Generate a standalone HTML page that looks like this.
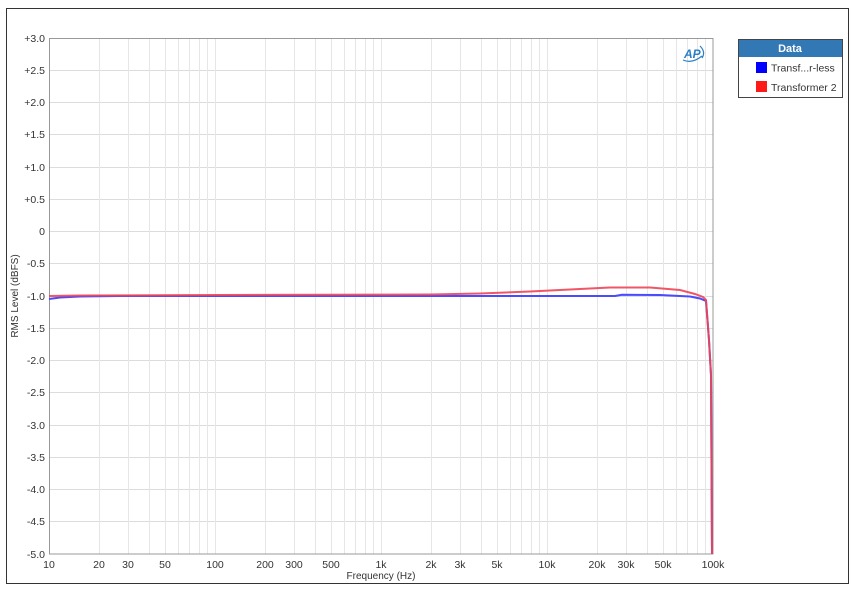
<!DOCTYPE html>
<html><head><meta charset="utf-8"><style>
body{margin:0;background:#fff;width:853px;height:596px;overflow:hidden;font-family:"Liberation Sans",sans-serif}
</style></head><body>
<svg width="853" height="596" xmlns="http://www.w3.org/2000/svg" font-family="Liberation Sans, sans-serif" font-size="10.5" fill="#333">
<rect x="6.5" y="8.5" width="842" height="575" fill="#fff" stroke="#333" stroke-width="1"/>
<g stroke="#dcdcdc" stroke-width="1">
<!-- horizontal -->
<line x1="49" x2="713" y1="70.5" y2="70.5"/><line x1="49" x2="713" y1="102.5" y2="102.5"/><line x1="49" x2="713" y1="134.5" y2="134.5"/><line x1="49" x2="713" y1="167.5" y2="167.5"/><line x1="49" x2="713" y1="199.5" y2="199.5"/><line x1="49" x2="713" y1="231.5" y2="231.5"/><line x1="49" x2="713" y1="263.5" y2="263.5"/><line x1="49" x2="713" y1="296.5" y2="296.5"/><line x1="49" x2="713" y1="328.5" y2="328.5"/><line x1="49" x2="713" y1="360.5" y2="360.5"/><line x1="49" x2="713" y1="392.5" y2="392.5"/><line x1="49" x2="713" y1="425.5" y2="425.5"/><line x1="49" x2="713" y1="457.5" y2="457.5"/><line x1="49" x2="713" y1="489.5" y2="489.5"/><line x1="49" x2="713" y1="521.5" y2="521.5"/>
</g>
<g stroke="#e6e6e6" stroke-width="1" id="v">
<!-- per decade offsets: 50,79,100,116,129,140,150,158 -->
<line x1="99.5" x2="99.5" y1="38" y2="554"/><line x1="128.5" x2="128.5" y1="38" y2="554"/><line x1="149.5" x2="149.5" y1="38" y2="554"/><line x1="165.5" x2="165.5" y1="38" y2="554"/><line x1="178.5" x2="178.5" y1="38" y2="554"/><line x1="189.5" x2="189.5" y1="38" y2="554"/><line x1="199.5" x2="199.5" y1="38" y2="554"/><line x1="207.5" x2="207.5" y1="38" y2="554"/><line x1="215.5" x2="215.5" y1="38" y2="554"/>
<line x1="265.5" x2="265.5" y1="38" y2="554"/><line x1="294.5" x2="294.5" y1="38" y2="554"/><line x1="315.5" x2="315.5" y1="38" y2="554"/><line x1="331.5" x2="331.5" y1="38" y2="554"/><line x1="344.5" x2="344.5" y1="38" y2="554"/><line x1="355.5" x2="355.5" y1="38" y2="554"/><line x1="365.5" x2="365.5" y1="38" y2="554"/><line x1="373.5" x2="373.5" y1="38" y2="554"/><line x1="381.5" x2="381.5" y1="38" y2="554"/>
<line x1="431.5" x2="431.5" y1="38" y2="554"/><line x1="460.5" x2="460.5" y1="38" y2="554"/><line x1="481.5" x2="481.5" y1="38" y2="554"/><line x1="497.5" x2="497.5" y1="38" y2="554"/><line x1="510.5" x2="510.5" y1="38" y2="554"/><line x1="521.5" x2="521.5" y1="38" y2="554"/><line x1="531.5" x2="531.5" y1="38" y2="554"/><line x1="539.5" x2="539.5" y1="38" y2="554"/><line x1="547.5" x2="547.5" y1="38" y2="554"/>
<line x1="597.5" x2="597.5" y1="38" y2="554"/><line x1="626.5" x2="626.5" y1="38" y2="554"/><line x1="647.5" x2="647.5" y1="38" y2="554"/><line x1="663.5" x2="663.5" y1="38" y2="554"/><line x1="676.5" x2="676.5" y1="38" y2="554"/><line x1="687.5" x2="687.5" y1="38" y2="554"/><line x1="697.5" x2="697.5" y1="38" y2="554"/><line x1="705.5" x2="705.5" y1="38" y2="554"/>
</g>
<rect x="49.5" y="38.5" width="663.5" height="515.5" fill="none" stroke="#999"/>
<polyline fill="none" stroke="#4a4aff" stroke-width="2" points="49,299 60,297.5 80,296.5 120,296 400,296 615,296 622,294.8 660,295 690,296.5 700,298.5 706,301 709,340 711,375 712,554"/>
<polyline fill="none" stroke="#ee4455" stroke-width="2" opacity="0.9" points="49,296 80,295.5 220,295 430,294.5 480,293.5 530,291.5 580,289 610,287.5 650,287.5 680,290 695,294 703,297 706,300 709,340 711,375 712,554"/>
<g text-anchor="end">
<text x="45" y="42">+3.0</text><text x="45" y="74">+2.5</text><text x="45" y="106">+2.0</text><text x="45" y="138">+1.5</text><text x="45" y="171">+1.0</text><text x="45" y="203">+0.5</text><text x="45" y="235">0</text><text x="45" y="267">-0.5</text><text x="45" y="300">-1.0</text><text x="45" y="332">-1.5</text><text x="45" y="364">-2.0</text><text x="45" y="396">-2.5</text><text x="45" y="429">-3.0</text><text x="45" y="461">-3.5</text><text x="45" y="493">-4.0</text><text x="45" y="525">-4.5</text><text x="45" y="558">-5.0</text>
</g>
<g text-anchor="middle">
<text x="49" y="568">10</text><text x="99" y="568">20</text><text x="128" y="568">30</text><text x="165" y="568">50</text><text x="215" y="568">100</text><text x="265" y="568">200</text><text x="294" y="568">300</text><text x="331" y="568">500</text><text x="381" y="568">1k</text><text x="431" y="568">2k</text><text x="460" y="568">3k</text><text x="497" y="568">5k</text><text x="547" y="568">10k</text><text x="597" y="568">20k</text><text x="626" y="568">30k</text><text x="663" y="568">50k</text><text x="713" y="568">100k</text>
<text x="381" y="579" font-size="10">Frequency (Hz)</text>
<text x="0" y="0" font-size="10" transform="translate(18,296) rotate(-90)">RMS Level (dBFS)</text>
</g>
<text x="684" y="58" font-size="12" font-weight="bold" font-style="italic" fill="#2a7fc4">AP</text>
<path d="M683 60 Q692 64 702 56 M700 46 Q706 52 702 58" fill="none" stroke="#2a7fc4" stroke-width="1.2"/>
<rect x="738.5" y="39.5" width="104" height="58" fill="#fff" stroke="#444"/>
<rect x="739" y="40" width="103" height="17" fill="#3278b4"/>
<text x="790" y="52" text-anchor="middle" fill="#fff" font-weight="bold" font-size="11">Data</text>
<rect x="756" y="62" width="11" height="11" fill="#0000ff"/>
<text x="771" y="71.5" font-size="10.5">Transf...r-less</text>
<rect x="756" y="81" width="11" height="11" fill="#ff1a1a"/>
<text x="771" y="91" font-size="10.5">Transformer  2</text>
</svg>
</body></html>
